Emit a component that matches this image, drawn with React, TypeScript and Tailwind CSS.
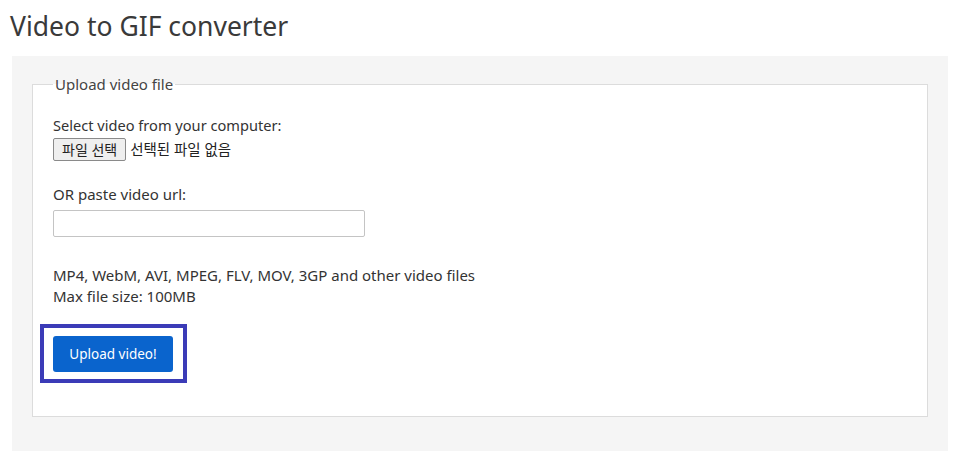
export default function App() {
  return (
    <div
      className="min-h-[459px] bg-white px-[10px] pt-[9px] text-[#333]"
      style={{ fontFamily: '"Segoe UI", "Noto Sans", "Noto Sans CJK KR", sans-serif' }}
    >
      <h1 className="text-[26.5px] leading-[35px] text-[#3a3a3a]">Video to GIF converter</h1>
      <div className="ml-[2px] mr-[3px] mt-[12px] bg-[#f5f5f5] px-[20px] pb-[34px] pt-[18px]">
        <fieldset className="border border-[#dcdcdc] bg-white px-[20px] pb-[33px]">
          <legend className="px-[2px] text-[15px] leading-[20px] text-[#444]">Upload video file</legend>
          <p className="mt-[21px] text-[14.6px] leading-[21px] text-[#333]">Select video from your computer:</p>
          <div className="mt-[2px] flex items-center gap-[4px]">
            <button className="h-[23px] rounded-[2px] border border-[#8a8a8a] bg-[#efefef] px-[8px] text-[14px] leading-none text-[#222]">
              파일 선택
            </button>
            <span className="text-[14.5px] text-[#222]">선택된 파일 없음</span>
          </div>
          <p className="mt-[23px] text-[15px] leading-[20px]">OR paste video url:</p>
          <input
            type="text"
            className="mt-[6px] block h-[27px] w-[312px] rounded-[2px] border border-[#c4c4c4] bg-white"
          />
          <p className="mt-[28px] text-[15px] leading-[21px]">
            MP4, WebM, AVI, MPEG, FLV, MOV, 3GP and other video files
            <br />
            Max file size: 100MB
          </p>
          <div className="-ml-[13px] mt-[17px] inline-block border-[4px] border-[#3b3bb7] bg-white pb-[7px] pl-[9px] pr-[10px] pt-[8px]">
            <button className="h-[36px] w-[120px] rounded-[3px] bg-[#0a64cd] text-[13.5px] text-white">Upload video!</button>
          </div>
        </fieldset>
      </div>
    </div>
  );
}
